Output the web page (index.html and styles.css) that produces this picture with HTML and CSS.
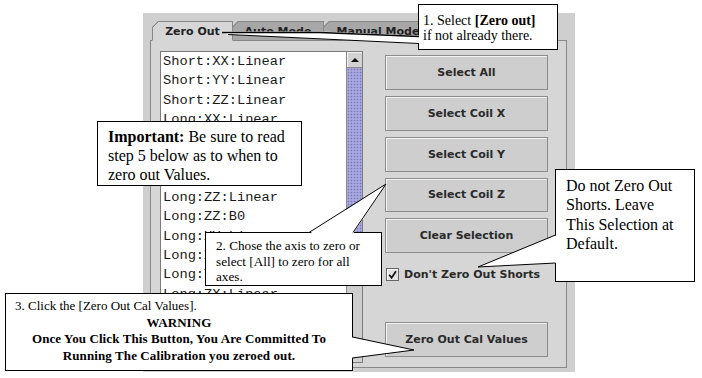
FILE: index.html
```html
<!DOCTYPE html>
<html lang="en">
<head>
    <meta charset="UTF-8">
    <title>Zero Out Calibration</title>
    <link rel="stylesheet" href="styles.css">
</head>
<body>
    <div class="frame">
        <div class="tabs">
            <div class="tab tab-zero active">Zero Out</div>
            <div class="tab tab-auto">Auto Mode</div>
            <div class="tab tab-manual">Manual Mode</div>
        </div>
        <div class="tab-body">
            <div class="list-box">
                <ul class="axis-list">
                    <li>Short:XX:Linear</li>
                    <li>Short:YY:Linear</li>
                    <li>Short:ZZ:Linear</li>
                    <li>Long:XX:Linear</li>
                    <li>Long:XX:B0</li>
                    <li>Long:YY:Linear</li>
                    <li>Long:YY:B0</li>
                    <li>Long:ZZ:Linear</li>
                    <li>Long:ZZ:B0</li>
                    <li>Long:XY:Linear</li>
                    <li>Long:XZ:Linear</li>
                    <li>Long:YZ:Linear</li>
                    <li>Long:ZX:Linear</li>
                    <li>Long:ZY:Linear</li>
                    <li>Long:YX:Linear</li>
                    <li>Long:XY:B0</li>
                </ul>
                <div class="scrollbar">
                    <div class="scroll-btn up"><span class="arrow-up"></span></div>
                    <div class="thumb"></div>
                    <div class="track"></div>
                    <div class="scroll-btn down"><span class="arrow-down"></span></div>
                </div>
            </div>
            <div class="controls">
                <button class="btn">Select All</button>
                <button class="btn">Select Coil X</button>
                <button class="btn">Select Coil Y</button>
                <button class="btn">Select Coil Z</button>
                <button class="btn">Clear Selection</button>
                <label class="check">
                    <span class="box">
                        <svg width="9" height="9" viewBox="0 0 9 9"><path d="M1.2 4.8 L3.6 7.8 L8 1.2" fill="none" stroke="#111" stroke-width="1.7"/></svg>
                    </span>
                    Don't Zero Out Shorts
                </label>
                <button class="btn btn-run">Zero Out Cal Values</button>
            </div>
        </div>
    </div>

    <!-- annotation callouts -->
    <div class="callout c-tab">1. Select <b>[Zero out]</b><br>if not already there.</div>
    <div class="callout c-important"><b>Important:</b> Be sure to read<br>step 5 below as to when to<br>zero out Values.</div>
    <div class="callout c-axis">2. Chose the axis to zero or<br>select [All] to zero for all<br>axes.</div>
    <div class="callout c-shorts">Do not Zero Out<br>Shorts. Leave<br>This Selection at<br>Default.</div>
    <div class="callout c-warning">
        <div>3. Click the [Zero Out Cal Values].</div>
        <div class="warn">WARNING</div>
        <div class="warn">Once You Click This Button, You Are Committed To</div>
        <div class="warn">Running The Calibration you zeroed out.</div>
    </div>

    <svg class="pointers" viewBox="0 0 702 378">
        <polygon class="wedge" points="222,31.5 320,31.5 420,35.5 420,44 228,34.5"/>
        <polyline class="edge thick" points="419,36.5 320,32.5 222,32.5"/>
        <polyline class="edge" points="228,34.5 419,43.5"/>

        <polygon class="wedge" points="309,234 386,184 353,234"/>
        <polyline class="edge" points="309,232.5 386,184 353,232.5"/>

        <polygon class="wedge" points="557,235 478,267 557,263"/>
        <polyline class="edge" points="555.5,235 478,267 555.5,263"/>

        <polygon class="wedge" points="351,337 414,350 351,358"/>
        <polyline class="edge" points="352.5,337 414,350 352.5,358"/>
    </svg>
</body>
</html>
```

FILE: styles.css
```css
body { margin: 0; padding: 13px 0 0 143px; width: 702px; height: 378px; box-sizing: border-box; position: relative; overflow: hidden; background: #fff; font-family: "DejaVu Sans", sans-serif; }

/* window + tabs */
.frame { width: 432px; height: 359px; box-sizing: border-box; padding: 8px 8px 4px 7px; background: #cfcfcf; }
.tabs { display: flex; height: 20px; padding-left: 2px; margin-bottom: -1px; position: relative; z-index: 1; }
.tab { box-sizing: border-box; height: 20px; margin-right: -1px; padding-top: 2px; border: 1px solid #878787; background-color: #a7a7a7; background-image: linear-gradient(135deg, transparent 4.2px, #878787 4.2px, #878787 5.4px, transparent 5.4px); background-origin: border-box; clip-path: polygon(0 6px, 6px 0, 100% 0, 100% 100%, 0 100%); color: #222; font-size: 11px; font-weight: bold; line-height: 16px; text-align: center; white-space: nowrap; overflow: hidden; }
.tab.active { background-color: #d6d6d6; border-bottom-color: #d6d6d6; position: relative; z-index: 2; }
.tab-zero { width: 81px; }
.tab-auto { width: 92px; }
.tab-manual { width: 110px; }
.tab-body { width: 417px; height: 328px; box-sizing: border-box; border: 1px solid #878787; background: #d6d6d6; padding: 10px 18px 4px 9px; display: flex; gap: 22px; }

/* list with scrollbar */
.list-box { width: 203px; height: 312px; box-sizing: border-box; display: flex; border: 1px solid #7b7b7b; background: #fff; }
.axis-list { flex: 1; margin: 0; padding: 0 0 0 2px; list-style: none; overflow: hidden; white-space: nowrap; font-family: "Liberation Mono", monospace; font-size: 13.7px; line-height: 19.4px; color: #1a1a1a; }
.scrollbar { width: 16px; box-sizing: border-box; display: flex; flex-direction: column; border-left: 1px solid #8a8a8a; background: #cdcdcd; }
.scroll-btn { height: 15px; display: flex; align-items: center; justify-content: center; background: #d2d2d2; box-shadow: inset 1px 1px 0 #f4f4f4; }
.scroll-btn.up { border-bottom: 1px solid #8a8a8a; }
.scroll-btn.down { border-top: 1px solid #8a8a8a; }
.arrow-up { width: 0; height: 0; border-left: 4px solid transparent; border-right: 4px solid transparent; border-bottom: 4px solid #000; }
.arrow-down { width: 0; height: 0; border-left: 4px solid transparent; border-right: 4px solid transparent; border-top: 4px solid #000; }
.thumb { height: 164px; background-color: #a9a9e0; background-image: radial-gradient(#7878b4 0.7px, transparent 1.1px); background-size: 3px 3px; border-bottom: 1px solid #6c6ca8; }
.track { flex: 1; }

/* right-hand controls */
.controls { width: 163px; display: flex; flex-direction: column; padding-top: 4px; }
.btn { height: 35px; margin: 0 0 6px; padding: 0; border: 1px solid #8c8c8c; background: #cecece; box-shadow: inset 1px 1px 0 #f3f3f3; font-family: "DejaVu Sans", sans-serif; font-size: 11px; font-weight: bold; color: #2a2a2a; }
.btn-run { margin-top: 40px; }
.check { display: flex; align-items: center; gap: 5px; height: 15px; margin-top: 8px; padding-left: 1px; font-size: 11px; font-weight: bold; color: #2a2a2a; white-space: nowrap; }
.box { width: 13px; height: 13px; box-sizing: border-box; display: flex; align-items: center; justify-content: center; border: 1px solid #666; background: #e2e2e2; box-shadow: inset 1px 1px 0 #fff; }

/* annotation callouts */
.callout { position: absolute; z-index: 5; box-sizing: border-box; background: #fff; border: 1px solid #000; color: #000; font-family: "Liberation Serif", serif; white-space: nowrap; }
.c-tab { left: 418px; top: 4px; width: 140px; height: 46px; padding: 8px 4px 0; font-size: 14px; line-height: 15px; }
.c-important { left: 97px; top: 121px; width: 205px; height: 65px; padding: 5px 10px 0; font-size: 16px; line-height: 19px; }
.c-axis { left: 205px; top: 232px; width: 177px; height: 54px; padding: 5px 10px 0; font-size: 13.2px; line-height: 15.5px; }
.c-shorts { left: 555px; top: 169px; width: 140px; height: 113px; padding: 6px 10px 0; font-size: 16px; line-height: 19.3px; }
.c-warning { left: 5px; top: 293px; width: 348px; height: 78px; padding: 4px 9px 0; font-size: 13px; line-height: 16.5px; }
.c-warning .warn { text-align: center; font-weight: bold; letter-spacing: 0.1px; }

.pointers { position: absolute; z-index: 6; left: 0; top: 0; width: 702px; height: 378px; pointer-events: none; }
.wedge { fill: #fff; }
.edge { fill: none; stroke: #000; stroke-width: 1; }
.edge.thick { stroke-width: 1.5; }
```
